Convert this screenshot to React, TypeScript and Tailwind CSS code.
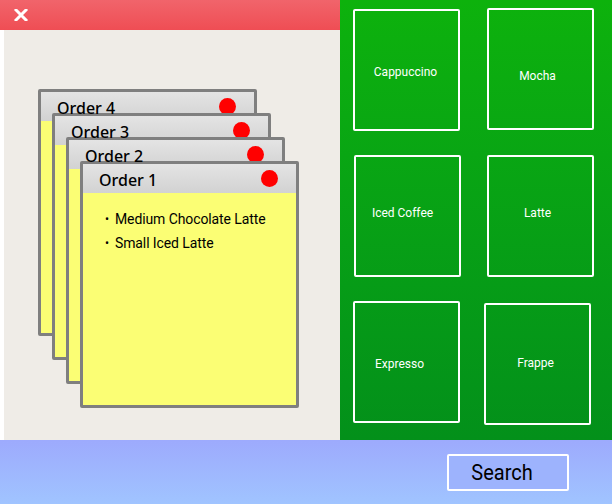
import React from "react";

const orders = [
  { name: "Order 4", items: [] as string[] },
  { name: "Order 3", items: [] as string[] },
  { name: "Order 2", items: [] as string[] },
  { name: "Order 1", items: ["Medium Chocolate Latte", "Small Iced Latte"] },
];

const offsets = ["ml-0 mt-0", "ml-[14px] mt-[24px]", "ml-[28px] mt-[48px]", "ml-[42px] mt-[72px]"];

const drinks = [
  { name: "Cappuccino", cls: "mt-[9px] ml-[13px]", text: "-translate-x-[1px] translate-y-[2px]" },
  { name: "Mocha", cls: "mt-[8px] ml-[147px]", text: "-translate-x-[3px] translate-y-[7px]" },
  { name: "Iced Coffee", cls: "mt-[155px] ml-[14px]", text: "-translate-x-[5px] -translate-y-[3px]" },
  { name: "Latte", cls: "mt-[155px] ml-[147px]", text: "-translate-x-[3px] -translate-y-[3px]" },
  { name: "Expresso", cls: "mt-[301px] ml-[13px]", text: "-translate-x-[7px] translate-y-[2px]" },
  { name: "Frappe", cls: "mt-[303px] ml-[144px]", text: "-translate-x-[2px] -translate-y-[1px]" },
];

function OrderCard({ name, items, pos }: { name: string; items: string[]; pos: string }) {
  return (
    <div className={`[grid-area:1/1] ${pos} flex h-[247px] w-[219px] flex-col overflow-hidden rounded-[2px] border-[3px] border-[#7f7f7f] bg-[#fbfe74]`}>
      <div className="flex h-[29px] shrink-0 items-center justify-between bg-gradient-to-b from-[#e4e4e4] to-[#d2d2d2] pl-[16px] pr-[18px]">
        <span className="translate-y-[1px] font-['Noto_Sans'] text-[16px] font-medium text-black">{name}</span>
        <span className="h-[17px] w-[17px] rounded-full bg-[#ff0000]" />
      </div>
      <ul className="mt-[17px] flex flex-col gap-[6px] pl-[22px] font-['Roboto'] text-[14px] tracking-[-0.1px] text-black">
        {items.map((it) => (
          <li key={it} className="flex items-center gap-[6px] leading-[18px]">
            <span className="text-[12px]">•</span>
            <span className="inline-block scale-y-[1.08]">{it}</span>
          </li>
        ))}
      </ul>
    </div>
  );
}

export default function App() {
  return (
    <div className="flex h-[504px] w-[612px] flex-col overflow-hidden bg-white">
      <div className="flex h-[440px]">
        <div className="flex w-[340px] flex-col">
          <div className="flex h-[30px] items-center bg-gradient-to-b from-[#f1646b] to-[#ef4d54] pl-[14px]">
            <svg width="14" height="12" viewBox="0 0 14 12">
              <path d="M2 1 L12 11 M12 1 L2 11" stroke="white" strokeWidth="3" strokeLinecap="square" />
            </svg>
          </div>
          <div className="ml-[4px] flex-1 bg-[#efece7] pl-[34px] pt-[59px]">
            <div className="grid">
              {orders.map((o, i) => (
                <OrderCard key={o.name} name={o.name} items={o.items} pos={offsets[i]} />
              ))}
            </div>
          </div>
        </div>
        <div className="grid flex-1 bg-gradient-to-b from-[#0db20c] to-[#03901a]">
          {drinks.map((d) => (
            <div
              key={d.name}
              className={`[grid-area:1/1] ${d.cls} flex h-[122px] w-[107px] items-center justify-center self-start justify-self-start rounded-[2px] border-2 border-white`}
            >
              <span className={`inline-block scale-y-[1.12] font-['Roboto'] text-[12px] text-white ${d.text}`}>{d.name}</span>
            </div>
          ))}
        </div>
      </div>
      <div className="flex flex-1 items-center justify-end bg-gradient-to-b from-[#9daafd] to-[#a0c4ff] pr-[43px]">
        <div className="flex h-[37px] w-[122px] items-center justify-center rounded-[2px] border-2 border-white bg-[#9db3fd] pr-[12px]">
          <span className="inline-block scale-y-[1.1] font-['Roboto'] text-[20px] text-black">Search</span>
        </div>
      </div>
    </div>
  );
}
